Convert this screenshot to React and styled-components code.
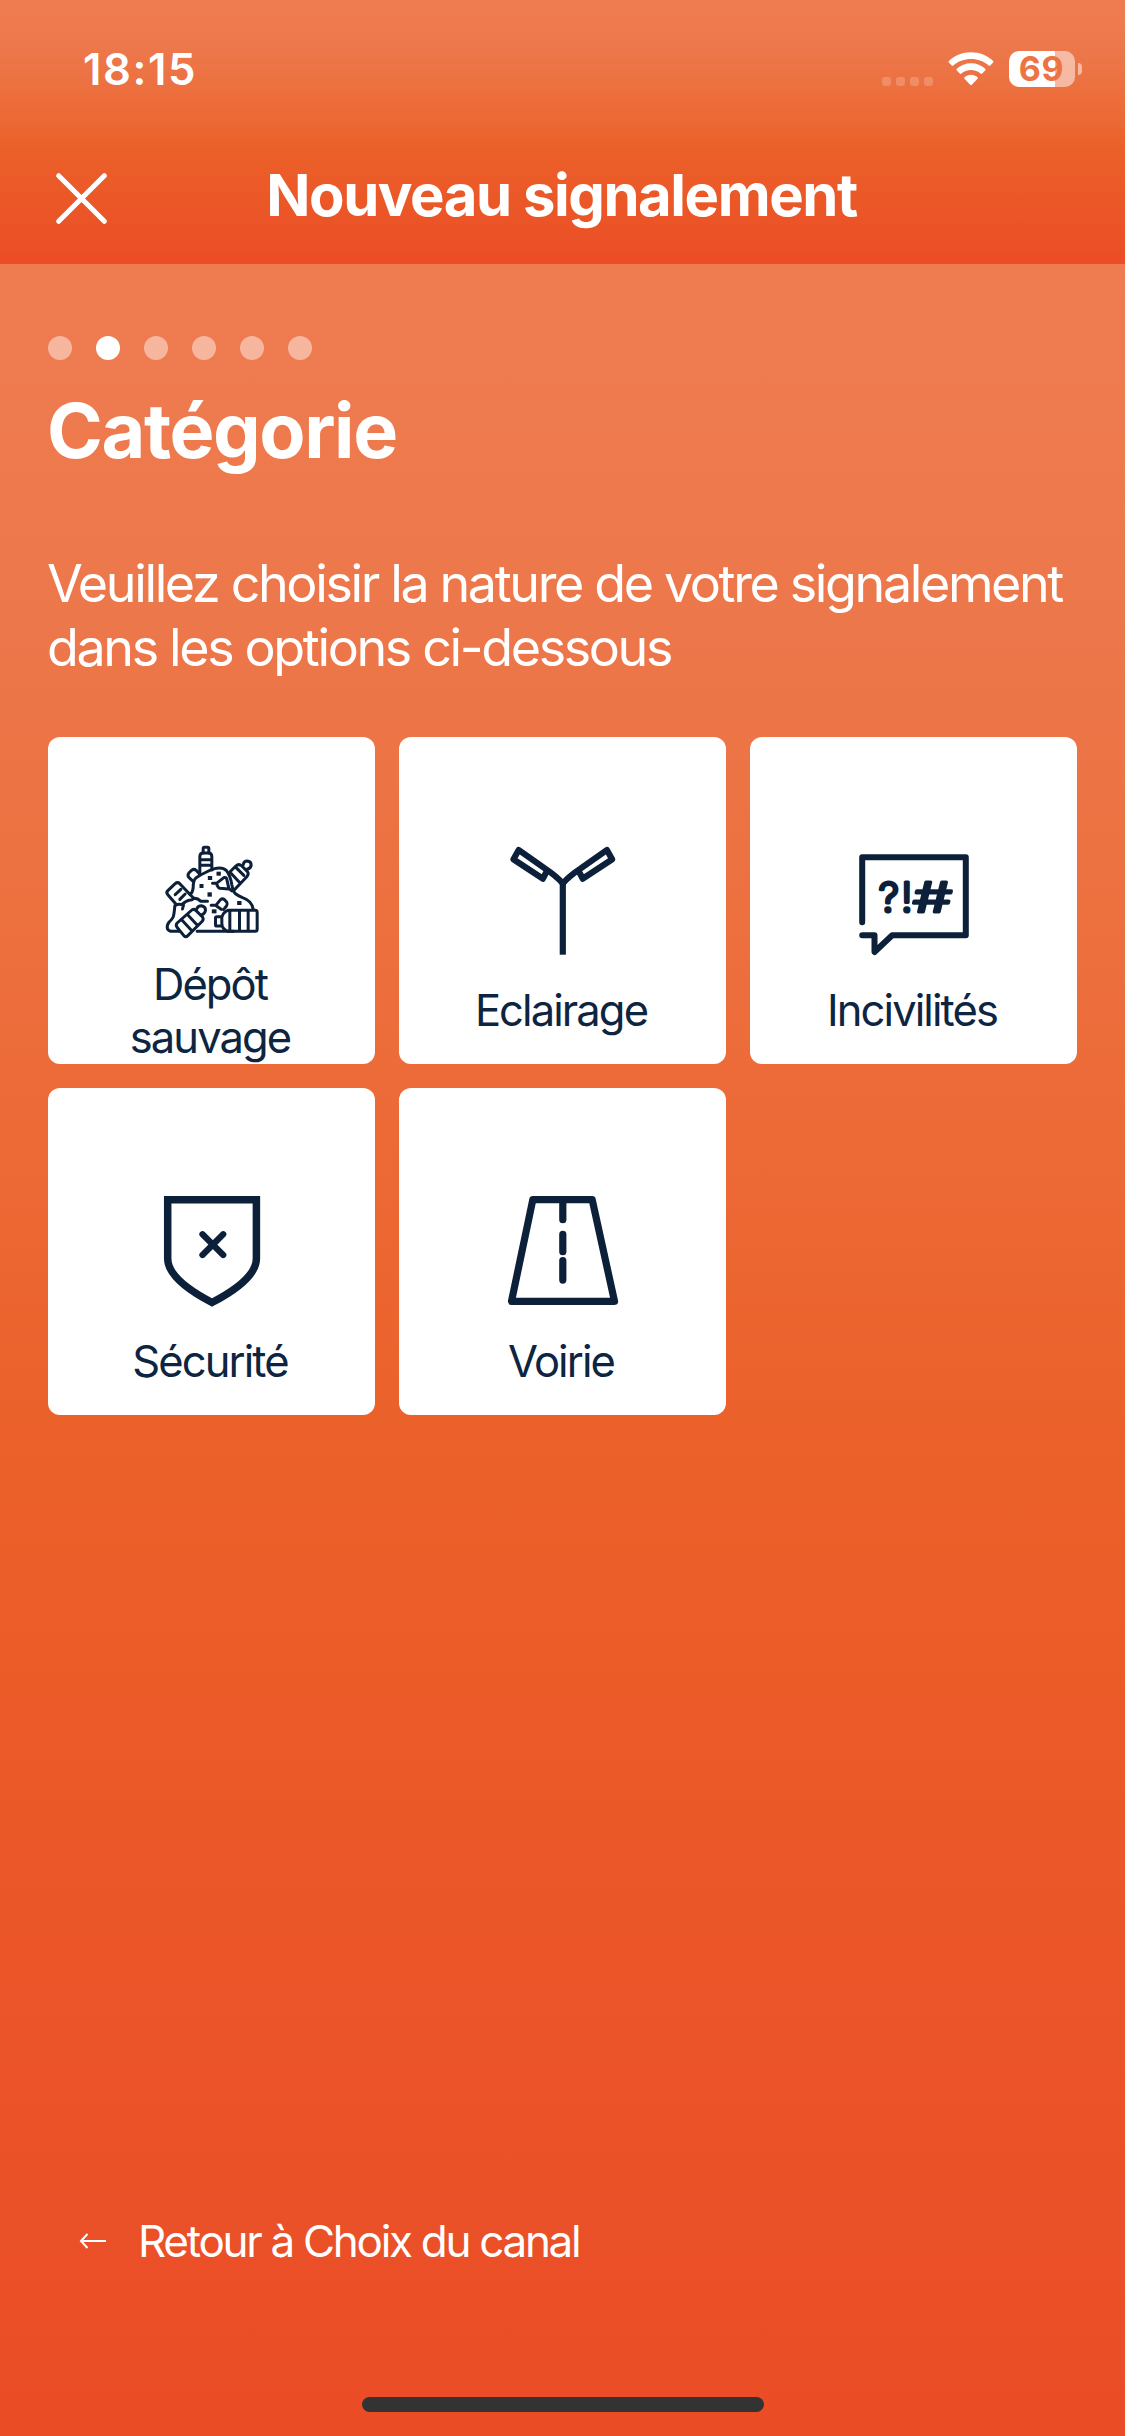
import React from 'react'
import styled, { createGlobalStyle } from 'styled-components'

const categories = [
  { id: 'depot', label: 'Dépôt sauvage', Icon: WasteIcon },
  { id: 'eclairage', label: 'Eclairage', Icon: LampIcon },
  { id: 'incivilites', label: 'Incivilités', Icon: BubbleIcon },
  { id: 'securite', label: 'Sécurité', Icon: ShieldIcon },
  { id: 'voirie', label: 'Voirie', Icon: RoadIcon },
]

const steps = [0, 1, 2, 3, 4, 5]
const currentStep = 1

function WasteIcon() {
  return (
    <CardIcon viewBox='4.5 21 360 360' strokeWidth='9'>
      {/* standing bottle */}
      <path d='M158 69V56q0-4 4-4h9q4 0 4 4v13' />
      <path d='M148 132V80q0-11 10-11h16q10 0 10 11v40M148 89h36M148 106h36' />
      <path d='M149 134l-12-13q-7-6-14 0l-8 8q-5 7 0 13l13 12' />
      {/* heap */}
      <path d='M118 193Q127 188 128 172Q128 152 136 144Q150 134 168 126Q182 118 192 116Q216 110 228 122Q240 138 244 164Q248 186 256 192Q264 198 276 203Q304 212 308 238' />
      <path d='M186 160h12l22-17q7-3 9 5l6 27 9 8M235 177l-27-2q-7-3-10-15' />
      {/* bottle on the right */}
      <path d='M238 126l18-18q9-8 18 0l17 17q5 7-2 15l-38 40M238 126l30 32M256 112l24 24' />
      <path d='M278 104q2-11 12-11 12 1 12 12-1 10-11 12' />
      {/* carton */}
      <path d='M78 224L52 194q-6-6 0-12l22-21q7-6 14 0l32 34 9 9M74 194l17-16M88 208l16-16' />
      <path d='M75 225q12-4 24 0l-3 12M96 222q12-10 20-11 8 0 15-6 11 0 20 9h20' />
      <path d='M73 227q-2 26-5 34-3 7-13 16-7 10-4 20 4 7 14 7h22M140 304h110' />
      {/* bottle lying at the front left */}
      <path d='M79 291q-4-6 1-12l44-39q7-4 12 1l20 20q4 6 0 12l-44 44q-6 6-12 0zM92 268l32 34M110 253l32 34' />
      <path d='M139 236q3-9 14-9 12 2 12 13-1 12-12 15' />
      {/* bottle lying at the front right */}
      <path d='M232 241h82q6 0 6 6v51q0 6-6 6h-82q-18-6-18-24v-18q4-16 18-21zM238 241v63M267 241v63M293 241v63' />
      <path d='M212 260h-13q-4 0-4 4v20q0 4 4 4h13' />
      <path d='M182 226h14l14-17q6-5 12 0l7 8q3 6-1 11l-9 11M198 228l14 10' />
      <g fill='#0d2039' stroke='none'>
        <rect x='198' y='125' width='13' height='12' />
        <rect x='172' y='138' width='13' height='12' />
        <rect x='147' y='162' width='12' height='12' />
        <rect x='171' y='187' width='13' height='13' />
        <rect x='184' y='238' width='14' height='12' />
        <rect x='260' y='213' width='13' height='12' />
      </g>
    </CardIcon>
  )
}

function LampIcon() {
  return (
    <CardIcon viewBox='0 0 120 120' strokeWidth='6.2'>
      <path d='M59.8 117.7V46.3' strokeLinecap='butt' />
      <path d='M59.8 46.3C54 40 48 35.5 42 31.5L15.7 13L10.5 22.3L39.8 41.7L44.5 33' strokeLinecap='butt' />
      <path d='M59.8 46.3C65.6 40 71.6 35.5 77.6 31.5L103.9 13L109.1 22.3L79.8 41.7L75.1 33' strokeLinecap='butt' />
    </CardIcon>
  )
}

function BubbleIcon() {
  return (
    <CardIcon viewBox='0 0 120 120' strokeWidth='6'>
      <path d='M8.2 85.2V20.3H111.8V98.3H38.2L20.5 115V98.3H8.2' />
      <IconText x='24.5' y='74.5'>
        ?
      </IconText>
      <IconText x='47' y='74.5'>
        !
      </IconText>
      <IconText x='59' y='74.5' textLength='39' lengthAdjust='spacingAndGlyphs'>
        #
      </IconText>
    </CardIcon>
  )
}

function ShieldIcon() {
  return (
    <CardIcon viewBox='0 0 120 120' strokeWidth='7.5'>
      <path
        d='M15.7 11.7H104.4V70.5C104.4 88 82 103 60 114.5C38 103 15.7 88 15.7 70.5Z'
        strokeLinejoin='miter'
      />
      <path d='M50.5 46.3L71.2 67M71.2 46.3L50.5 67' strokeWidth='6.3' />
    </CardIcon>
  )
}

function RoadIcon() {
  return (
    <CardIcon viewBox='0 0 120 120' strokeWidth='7.2'>
      <path d='M29.8 11.7H89.2L111.5 113.3H8.5Z' />
      <path d='M59.8 11.7V31.7M59.8 46.3V63.7M59.8 72.6V92.1' />
    </CardIcon>
  )
}

function StatusBar() {
  return (
    <Status>
      <Time>18:15</Time>
      <StatusIcons>
        <Signal>
          <i />
          <i />
          <i />
          <i />
        </Signal>
        <svg width='46' height='34' viewBox='0 0 46 34' fill='#fff'>
          <path d='M23 0.2C31.5 0.2 39.3 3.5 45.1 8.9Q45.9 9.7 45.1 10.5L42.3 13.5Q41.5 14.2 40.7 13.5C36 9.2 29.8 6.9 23 6.9S10 9.2 5.3 13.5Q4.5 14.2 3.7 13.5L0.9 10.5Q0.1 9.7 0.9 8.9C6.7 3.5 14.5 0.2 23 0.2Z' />
          <path d='M23 11.3C28.4 11.3 33.4 13.3 37.2 16.8Q38 17.6 37.2 18.4L34.2 21.5Q33.4 22.3 32.6 21.6C30 19.3 26.7 18 23 18S16 19.3 13.4 21.6Q12.6 22.3 11.8 21.5L8.8 18.4Q8 17.6 8.8 16.8C12.6 13.3 17.6 11.3 23 11.3Z' />
          <path d='M23 22.8C25.6 22.8 27.8 23.7 29.5 25.2Q30.3 26 29.5 26.8L23.8 32.8Q23 33.6 22.2 32.8L16.5 26.8Q15.7 26 16.5 25.2C18.2 23.7 20.4 22.8 23 22.8Z' />
        </svg>
        <Battery>
          <BatteryBody>69</BatteryBody>
          <BatteryTip />
        </Battery>
      </StatusIcons>
    </Status>
  )
}

function App() {
  return (
    <Screen>
      <GlobalStyle />
      <Header>
        <StatusBar />
        <NavBar>
          <CloseButton aria-label='Fermer'>
            <svg width='51' height='51' viewBox='0 0 51 51' stroke='#fff' strokeWidth='5' strokeLinecap='round'>
              <path d='M2.7 2.7L48.3 48.3M48.3 2.7L2.7 48.3' />
            </svg>
          </CloseButton>
          <NavTitle>Nouveau signalement</NavTitle>
        </NavBar>
      </Header>
      <Content>
        <Steps>
          {steps.map((step) => (
            <Step key={step} $active={step === currentStep} />
          ))}
        </Steps>
        <Heading>Catégorie</Heading>
        <Intro>
          Veuillez choisir la nature de votre signalement
          <br />
          dans les options ci-dessous
        </Intro>
        <Grid>
          {categories.map(({ id, label, Icon }) => (
            <Card key={id}>
              <Icon />
              <CardLabel>
                <span>{label}</span>
              </CardLabel>
            </Card>
          ))}
        </Grid>
        <BackLink>
          <svg width='28' height='16' viewBox='0 0 28 16' fill='none' stroke='#fff' strokeWidth='2'>
            <path d='M27 8H2M8.5 1L2 8L8.5 15' />
          </svg>
          Retour à Choix du canal
        </BackLink>
        <HomeIndicator />
      </Content>
    </Screen>
  )
}

export default App

const GlobalStyle = createGlobalStyle`
  * {
    box-sizing: border-box;
  }

  body {
    margin: 0;
    font-family: Inter, 'Liberation Sans', sans-serif;
  }
`

const Screen = styled.div`
  display: flex;
  flex-direction: column;
  width: 1125px;
  height: 2436px;
  color: #fff;
  overflow: hidden;
`

const Header = styled.header`
  height: 264px;
  background: linear-gradient(#ef7c51 0%, #ec774a 20%, #ed703f 33%, #eb6029 57%, #eb4d26 100%);
`

const Status = styled.div`
  display: flex;
  align-items: center;
  justify-content: space-between;
  height: 138px;
  padding: 0 43px 0 83px;
`

const Time = styled.span`
  font-size: 43.6px;
  font-weight: 600;
  letter-spacing: 1.6px;
`

const StatusIcons = styled.div`
  display: flex;
  align-items: center;
`

const Signal = styled.div`
  display: flex;
  gap: 5px;
  margin: 24px 15px 0 0;

  i {
    width: 9px;
    height: 9px;
    border-radius: 3px;
    background: rgba(255, 255, 255, 0.2);
  }
`

const Battery = styled.div`
  display: flex;
  align-items: center;
  margin-left: 15px;
`

const BatteryBody = styled.div`
  width: 66px;
  height: 36px;
  padding-right: 1px;
  border-radius: 10px;
  background: linear-gradient(90deg, #fff 46px, rgba(255, 255, 255, 0.5) 46px);
  color: #ed7442;
  font-size: 34px;
  font-weight: 700;
  line-height: 36px;
  letter-spacing: 0.6px;
  text-align: center;
`

const BatteryTip = styled.div`
  width: 4px;
  height: 12px;
  margin-left: 3px;
  border-radius: 0 4px 4px 0;
  background: rgba(255, 255, 255, 0.5);
`

const NavBar = styled.div`
  display: grid;
  grid-template-columns: 170px 1fr 172px;
  align-items: center;
  height: 114px;
`

const CloseButton = styled.button`
  display: flex;
  margin: 7px 0 0 56px;
  padding: 0;
  width: 51px;
  border: none;
  background: none;
`

const NavTitle = styled.h1`
  margin: 0;
  font-size: 58px;
  font-weight: 700;
  letter-spacing: -1.45px;
  text-align: center;
  white-space: nowrap;
`

const Content = styled.main`
  flex: 1;
  display: flex;
  flex-direction: column;
  padding: 72px 48px 24px;
  background: linear-gradient(#ef7c51 0%, #ec774a 17%, #ed703f 30%, #eb6029 55%, #eb5228 85%, #ea4d26 100%);
`

const Steps = styled.div`
  display: flex;
  gap: 24px;
`

const Step = styled.div`
  width: 24px;
  height: 24px;
  border-radius: 50%;
  background: ${({ $active }) => ($active ? '#fff' : 'rgba(255, 255, 255, 0.45)')};
`

const Heading = styled.h2`
  margin: 26px 0 0 -1px;
  font-size: 75.5px;
  font-weight: 700;
  line-height: 90px;
  letter-spacing: -1.4px;
`

const Intro = styled.p`
  margin: 76px 0 0 -1px;
  font-size: 52px;
  line-height: 64px;
  letter-spacing: -2.37px;
  white-space: nowrap;
`

const Grid = styled.div`
  display: grid;
  grid-template-columns: repeat(3, 327px);
  grid-auto-rows: 327px;
  gap: 24px;
  margin-top: 57px;
`

const Card = styled.div`
  display: flex;
  flex-direction: column;
  align-items: center;
  padding-top: 100px;
  border-radius: 12px;
  background: #fff;
`

const CardIcon = styled.svg`
  width: 120px;
  height: 120px;
  flex-shrink: 0;
  fill: none;
  stroke: #0d2039;
  stroke-linecap: round;
  stroke-linejoin: round;
`

const IconText = styled.text`
  fill: #0d2039;
  stroke-width: 3px;
  font-size: 41px;
  font-weight: 300;
`

const CardLabel = styled.div`
  display: flex;
  align-items: center;
  height: 107px;
  padding-right: 3px;
  color: #0d2541;
  font-size: 43.5px;
  line-height: 53px;
  letter-spacing: -1.9px;
  text-align: center;

  span {
    max-width: 220px;
  }
`

const BackLink = styled.a`
  display: flex;
  align-items: center;
  gap: 31px;
  height: 60px;
  margin: auto 0 126px 31px;
  font-size: 44px;
  letter-spacing: -2.3px;
`

const HomeIndicator = styled.div`
  align-self: center;
  flex-shrink: 0;
  width: 402px;
  height: 15px;
  border-radius: 8px;
  background: #333;
`
